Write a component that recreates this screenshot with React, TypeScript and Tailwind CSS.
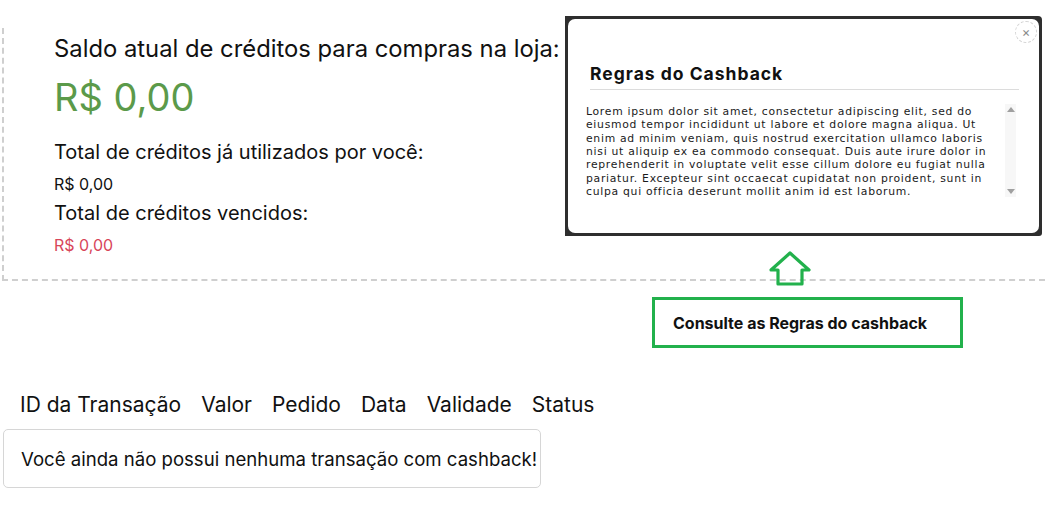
const loremLines = [
  "Lorem ipsum dolor sit amet, consectetur adipiscing elit, sed do",
  "eiusmod tempor incididunt ut labore et dolore magna aliqua. Ut",
  "enim ad minim veniam, quis nostrud exercitation ullamco laboris",
  "nisi ut aliquip ex ea commodo consequat. Duis aute irure dolor in",
  "reprehenderit in voluptate velit esse cillum dolore eu fugiat nulla",
  "pariatur. Excepteur sint occaecat cupidatat non proident, sunt in",
  "culpa qui officia deserunt mollit anim id est laborum.",
];

const columns = ["ID da Transação", "Valor", "Pedido", "Data", "Validade", "Status"];

const RulesPreview = () => (
  <div className="absolute left-[565px] top-[16px] h-[220px] w-[477px] rounded-tr-[4px] rounded-br-[3px] bg-[#2e2e2e] p-[3px]">
    <div className="relative h-full w-full rounded-[7px] bg-white">
      <div className="absolute left-[447px] top-[2px] flex h-[22px] w-[22px] items-center justify-center rounded-full border border-dashed border-[#d4d4d4] text-[13px] leading-none text-[#8a8a8a]">
        ×
      </div>

      <h3 className="pl-[22px] pt-[44px] text-[17.5px] font-bold leading-[22px] tracking-[1px] text-[#111]">
        Regras do Cashback
      </h3>
      <div className="ml-[22px] mt-[4px] h-px w-[429px] bg-[#dcdcdc]" />

      <div className="mt-[15px] flex pl-[18px]">
        <div className="w-[419px] font-['DejaVu_Sans',Verdana,sans-serif] text-[10.8px] leading-[13.35px] tracking-[0.72px] text-[#1a1a1a]">
          {loremLines.map((line) => (
            <div key={line} className="whitespace-nowrap">
              {line}
            </div>
          ))}
        </div>
        <div className="-mt-[1px] flex h-[93px] w-[11px] flex-col items-center justify-between bg-[#f7f7f7] py-[3px]">
          <div className="h-0 w-0 border-x-[4px] border-b-[5px] border-x-transparent border-b-[#a0a0a0]" />
          <div className="h-0 w-0 border-x-[4px] border-t-[5px] border-x-transparent border-t-[#a0a0a0]" />
        </div>
      </div>
    </div>
  </div>
);

const UpArrow = () => (
  <svg
    className="absolute left-[768px] top-[251px]"
    width="44"
    height="36"
    viewBox="0 0 44 36"
    fill="none"
  >
    <path
      d="M22 2 L41 19 L34 19 L34 33 L10 33 L10 19 L3 19 Z"
      stroke="#22b14c"
      strokeWidth="3.2"
      strokeLinejoin="round"
    />
  </svg>
);

export default function App() {
  return (
    <div className="relative h-[508px] w-[1057px] overflow-hidden bg-white pt-[28px] font-['Inter',sans-serif] text-[#111]">
      {/* saldo */}
      <div className="ml-[2px] w-[1043px] border-b-2 border-l-2 border-dashed border-[#cfcfcf] pb-[22px] pl-[50px] pt-[6px]">
        <p className="text-[23.8px] leading-[30px]">Saldo atual de créditos para compras na loja:</p>
        <p className="mt-[10px] text-[38px] leading-[46px] text-[#5b9a4a]">R$ 0,00</p>
        <p className="mt-[18px] text-[20px] leading-[28px]">Total de créditos já utilizados por você:</p>
        <p className="mt-[6px] text-[16px] leading-[24px]">R$ 0,00</p>
        <p className="mt-[3px] text-[20px] leading-[28px]">Total de créditos vencidos:</p>
        <p className="mt-[6px] text-[16px] leading-[24px] text-[#d8465a]">R$ 0,00</p>
      </div>

      <RulesPreview />
      <UpArrow />

      <div className="ml-[652px] mt-[16px] flex h-[51px] w-[311px] items-center border-[3px] border-[#22b14c] pl-[18px]">
        <span className="text-[16px] font-bold text-[#111]">Consulte as Regras do cashback</span>
      </div>

      {/* transações */}
      <div className="mt-[43px] flex gap-[20px] pl-[20px] text-[21px] leading-[28px] text-[#111]">
        {columns.map((c) => (
          <span key={c}>{c}</span>
        ))}
      </div>
      <div className="ml-[3px] mt-[10px] flex h-[59px] w-[538px] items-center rounded-[5px] border border-[#d6d6d6] pl-[17px]">
        <span className="whitespace-nowrap text-[18.6px] leading-[26px]">
          Você ainda não possui nenhuma transação com cashback!
        </span>
      </div>
    </div>
  );
}
